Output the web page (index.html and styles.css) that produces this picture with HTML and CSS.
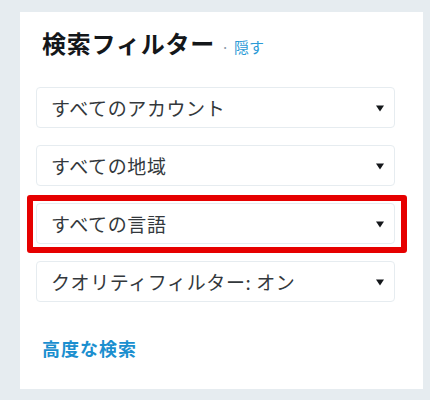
FILE: index.html
```html
<!DOCTYPE html>
<html lang="ja">
<head>
<meta charset="utf-8">
<link rel="stylesheet" href="styles.css">
</head>
<body>
<div class="card">
  <div class="header">
    <h3 class="title">検索フィルター</h3>
    <span class="dot">·</span>
    <a class="hide">隠す</a>
  </div>
  <div class="selects">
    <div class="select"><span class="label">すべてのアカウント</span><svg class="arrow" width="8" height="8" viewBox="0 0 8 8"><path d="M0 1.5 H8 L4 7.5 Z"/></svg></div>
    <div class="select"><span class="label">すべての地域</span><svg class="arrow" width="8" height="8" viewBox="0 0 8 8"><path d="M0 1.5 H8 L4 7.5 Z"/></svg></div>
    <div class="select highlighted"><span class="label">すべての言語</span><svg class="arrow" width="8" height="8" viewBox="0 0 8 8"><path d="M0 1.5 H8 L4 7.5 Z"/></svg><span class="mark"></span></div>
    <div class="select"><span class="label">クオリティフィルター: オン</span><svg class="arrow" width="8" height="8" viewBox="0 0 8 8"><path d="M0 1.5 H8 L4 7.5 Z"/></svg></div>
  </div>
  <a class="advanced">高度な検索</a>
</div>
</body>
</html>
```
FILE: styles.css
```css
html, body {
  margin: 0;
  padding: 0;
  background: #e6ecf0;
  font-family: "Noto Sans CJK JP", "Noto Sans", sans-serif;
}
.card {
  margin: 12px 0 0 20px;
  width: 403px;
  height: 377px;
  background: #ffffff;
  box-sizing: border-box;
  padding: 0 28px 0 16px;
}
.header {
  display: flex;
  align-items: baseline;
  padding: 16px 0 0 6px;
  height: 75px;
  box-sizing: border-box;
}
.title {
  margin: 0;
  font-size: 24px;
  font-weight: 700;
  color: #14171a;
  line-height: 30px;
  letter-spacing: 0.8px;
}
.dot {
  font-size: 14px;
  color: #8899a6;
  margin: 0 5px 0 6px;
}
.hide {
  font-size: 15px;
  color: #2b9ad6;
}
.selects {
  display: flex;
  flex-direction: column;
  gap: 17px;
}
.select {
  position: relative;
  height: 41px;
  box-sizing: border-box;
  border: 1px solid #e6ecf0;
  border-radius: 4px;
  display: flex;
  align-items: center;
  justify-content: space-between;
  padding: 0 10px 0 14px;
}
.label {
  font-size: 19px;
  color: #33383c;
  letter-spacing: 0.6px;
}
.arrow {
  fill: #14171a;
}
.mark {
  position: absolute;
  left: -10px;
  top: -9px;
  right: -13px;
  bottom: -10px;
  border: 6px solid #e60000;
  border-radius: 3px;
}
.advanced {
  display: block;
  margin: 33px 0 0 6px;
  font-size: 18px;
  font-weight: 700;
  color: #1b8fcf;
  letter-spacing: 1px;
}
```
